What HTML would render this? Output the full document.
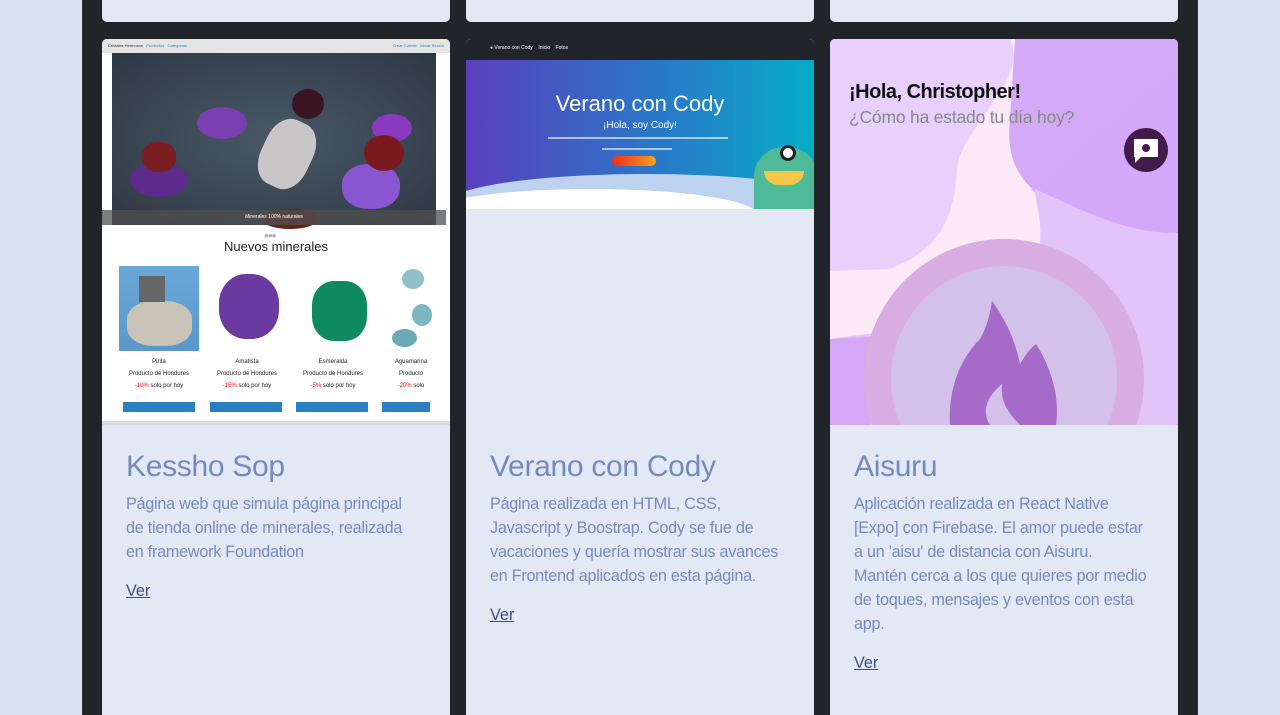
<!DOCTYPE html>
<html><head><meta charset="utf-8"><style>
*{margin:0;padding:0;box-sizing:border-box}
html,body{width:1280px;height:715px;overflow:hidden}
body{background:#d8e1f1;font-family:"Liberation Sans",sans-serif;position:relative}
.wrap{position:absolute;left:82px;top:0;width:1116px;height:715px;background:#212428;border-left:1px solid #333;border-right:1px solid #333}
.card{position:absolute;width:348px;background:#e3e9f4;border-radius:5px;overflow:hidden}
.top{top:-10px;height:32px}
.main{top:39px;height:686px}
.img{position:absolute;left:0;top:0;width:348px;height:386px;overflow:hidden}
.body{position:absolute;left:24px;top:410px;width:310px;color:#7788bd}
.body h2{font-weight:normal;font-size:30px;line-height:36px;letter-spacing:-0.3px}
.body p{font-size:16.2px;line-height:24px;margin-top:7px;letter-spacing:-0.25px}
.body a{display:inline-block;margin-top:18px;color:#3f4d80;font-size:16.2px;text-decoration:underline}
.abs{position:absolute}
</style></head><body>
<div class="wrap"></div>
<div class="card top" style="left:102px"></div>
<div class="card top" style="left:466px"></div>
<div class="card top" style="left:830px"></div>

<!-- Kessho -->
<div class="card main" style="left:102px">
 <div class="img" style="background:#fff">
  <div class="abs" style="left:0;top:0;width:348px;height:14px;background:#e4e4e4;font-size:4px;color:#333;padding:4px 6px">Cristales Hermosos &nbsp; <span style="color:#2a7fc0">Productos &nbsp; Categorías</span><span style="float:right;color:#2a7fc0">Crear Cuenta &nbsp; Iniciar Sesión</span></div>
  <div class="abs" style="left:10px;top:14px;width:324px;height:172px;background:radial-gradient(ellipse at 50% 50%,#4a5866,#2e3843)"></div>
  <div class="abs" style="left:95px;top:68px;width:50px;height:32px;border-radius:50%;background:#7a3fb0"></div>
  <div class="abs" style="left:28px;top:123px;width:58px;height:35px;border-radius:50%;background:#5b2a8c"></div>
  <div class="abs" style="left:240px;top:125px;width:58px;height:45px;border-radius:45%;background:#8a55d0"></div>
  <div class="abs" style="left:270px;top:75px;width:40px;height:28px;border-radius:50%;background:#8a3ac0"></div>
  <div class="abs" style="left:160px;top:80px;width:50px;height:70px;border-radius:40%;background:#c9c6c8;transform:rotate(25deg)"></div>
  <div class="abs" style="left:40px;top:103px;width:34px;height:30px;border-radius:45%;background:#7a1e22"></div>
  <div class="abs" style="left:262px;top:96px;width:40px;height:36px;border-radius:50%;background:#7a1a1e"></div>
  <div class="abs" style="left:190px;top:50px;width:32px;height:30px;border-radius:50%;background:#3a1420"></div>
  <div class="abs" style="left:160px;top:170px;width:56px;height:20px;border-radius:50%;background:#6a2218"></div>
  <div class="abs" style="left:0;top:171px;width:344px;height:15px;background:rgba(80,80,80,.75);color:#fff;font-size:5px;text-align:center;line-height:15px">Minerales 100% naturales</div>
  <div class="abs" style="left:162px;top:192px;font-size:8px;color:#aaa;letter-spacing:-1px">●●●</div>
  <div class="abs" style="left:0;top:200px;width:348px;text-align:center;font-size:13px;color:#222">Nuevos minerales</div>
  <div class="abs" style="left:17px;top:227px;width:80px;height:85px;background:linear-gradient(#6aa8d8,#5a98cc)"><div class="abs" style="left:8px;top:35px;width:65px;height:45px;border-radius:40%;background:#c9c3b8"></div><div class="abs" style="left:20px;top:10px;width:26px;height:26px;background:#666"></div></div>
  <div class="abs" style="left:117px;top:235px;width:60px;height:65px;border-radius:45%;background:#6a3aa0"></div>
  <div class="abs" style="left:210px;top:242px;width:55px;height:60px;border-radius:40%;background:#0f8a60"></div>
  <div class="abs" style="left:300px;top:230px;width:22px;height:20px;border-radius:50%;background:#8fc2c8"></div>
  <div class="abs" style="left:310px;top:265px;width:20px;height:22px;border-radius:50%;background:#7cb6bf"></div>
  <div class="abs" style="left:290px;top:290px;width:25px;height:18px;border-radius:50%;background:#6eaab5"></div>
  <div class="abs" style="left:17px;top:320px;width:315px;font-size:6px;color:#222">
   <div style="position:absolute;left:0;width:80px;text-align:center">Pirita<br><br>Producto de Hondures<br><br><span style="color:red">-10%</span> solo por hoy</div>
   <div style="position:absolute;left:88px;width:80px;text-align:center">Amatista<br><br>Producto de Hondures<br><br><span style="color:red">-15%</span> solo por hoy</div>
   <div style="position:absolute;left:174px;width:80px;text-align:center">Esmeralda<br><br>Producto de Hondures<br><br><span style="color:red">-5%</span> solo por hoy</div>
   <div style="position:absolute;left:262px;width:60px;text-align:center">Aguamarina<br><br>Producto<br><br><span style="color:red">-20%</span> solo</div>
  </div>
  <div class="abs" style="left:21px;top:363px;width:72px;height:10px;background:#2a7fc0"></div>
  <div class="abs" style="left:108px;top:363px;width:72px;height:10px;background:#2a7fc0"></div>
  <div class="abs" style="left:194px;top:363px;width:72px;height:10px;background:#2a7fc0"></div>
  <div class="abs" style="left:280px;top:363px;width:48px;height:10px;background:#2a7fc0"></div>
  <div class="abs" style="left:0;top:382px;width:348px;height:4px;background:#ddd"></div>
 </div>
 <div class="body"><h2>Kessho Sop</h2><p>Página web que simula página principal<br>de tienda online de minerales, realizada<br>en framework Foundation</p><a>Ver</a></div>
</div>

<!-- Verano -->
<div class="card main" style="left:466px">
 <div class="img" style="height:170px">
  <div class="abs" style="left:0;top:0;width:348px;height:21px;background:#212428;color:#fff;font-size:5px;padding:6px 24px">● Verano con Cody &nbsp;&nbsp; Inicio &nbsp;&nbsp; Fotos</div>
  <div class="abs" style="left:0;top:21px;width:348px;height:149px;background:linear-gradient(90deg,#5a3fbd,#2a78c8 55%,#05acc6)"></div>
  <div class="abs" style="left:0;top:52px;width:348px;text-align:center;color:#fff;font-size:22px;font-weight:300">Verano con Cody</div>
  <div class="abs" style="left:0;top:81px;width:348px;text-align:center;color:#fff;font-size:10px">¡Hola, soy Cody!</div>
  <div class="abs" style="left:82px;top:98px;width:180px;height:2px;background:rgba(255,255,255,.6)"></div>
  <div class="abs" style="left:136px;top:109px;width:70px;height:2px;background:rgba(255,255,255,.6)"></div>
  <div class="abs" style="left:146px;top:117px;width:44px;height:10px;border-radius:5px;background:linear-gradient(90deg,#f02a1e,#f7a21c)"></div>
  <div class="abs" style="left:-20px;top:135px;width:400px;height:60px;border-radius:50%;background:#bcd2ef"></div>
  <div class="abs" style="left:-40px;top:150px;width:330px;height:50px;border-radius:50%;background:#fff"></div>
  <div class="abs" style="left:288px;top:108px;width:64px;height:70px;border-radius:30px 30px 0 0;background:#4fba98"></div>
  <div class="abs" style="left:314px;top:106px;width:16px;height:16px;border-radius:50%;background:#fff;border:3px solid #222"></div>
  <div class="abs" style="left:298px;top:132px;width:40px;height:14px;border-radius:0 0 20px 20px;background:#f3c84a"></div>
 </div>
 <div class="body"><h2>Verano con Cody</h2><p>Página realizada en HTML, CSS,<br>Javascript y Boostrap. Cody se fue de<br>vacaciones y quería mostrar sus avances<br>en Frontend aplicados en esta página.</p><a>Ver</a></div>
</div>

<!-- Aisuru -->
<div class="card main" style="left:830px">
 <div class="img" style="background:#fce9f8">
  <svg class="abs" style="left:0;top:0" width="348" height="386">
   <path d="M0 0H180C200 40 130 90 127 130C124 180 110 210 60 230L0 232Z" fill="#e7d0fc"/>
   <path d="M185 0H348V195C300 195 270 180 240 170C190 155 175 120 180 80Z" fill="#d4aaf7"/>
   <path d="M205 150C240 120 280 80 348 30V194C290 195 240 180 200 150Z" fill="#d3a6f8" opacity=".6"/>
   <path d="M0 300C60 290 120 295 200 240C220 200 205 165 205 150C260 175 300 195 348 194V386H0Z" fill="#e2c4fb"/>
   <path d="M0 300C30 298 50 298 70 296L40 386H0Z" fill="#d6a8f7"/>
   <circle cx="174" cy="340" r="140" fill="#d8aee3"/>
   <circle cx="174" cy="340" r="113" fill="#d3c1ea"/>
   <path d="M162 262C175 280 185 300 190 325C196 315 200 310 206 305C222 330 230 360 226 386H120C118 350 130 320 150 300C157 288 160 275 162 262Z" fill="#a66ac8"/>
   <path d="M160 386C150 370 160 355 172 345C170 365 180 375 190 386Z" fill="#d3c1ea"/>
   <circle cx="316" cy="111" r="22" fill="#421a4c"/>
   <path d="M304 100H328V118H311L305 124V118H304Z" fill="#fff"/>
   <circle cx="316" cy="109" r="4" fill="#421a4c"/>
  </svg>
  <div class="abs" style="left:19px;top:42px;font-size:20px;font-weight:bold;color:#111;letter-spacing:-0.5px">¡Hola, Christopher!</div>
  <div class="abs" style="left:19px;top:68px;font-size:17.5px;color:#888;letter-spacing:-0.2px">¿Cómo ha estado tu día hoy?</div>
 </div>
 <div class="body"><h2>Aisuru</h2><p>Aplicación realizada en React Native<br>[Expo] con Firebase. El amor puede estar<br>a un 'aisu' de distancia con Aisuru.<br>Mantén cerca a los que quieres por medio<br>de toques, mensajes y eventos con esta<br>app.</p><a>Ver</a></div>
</div>
</body></html>
